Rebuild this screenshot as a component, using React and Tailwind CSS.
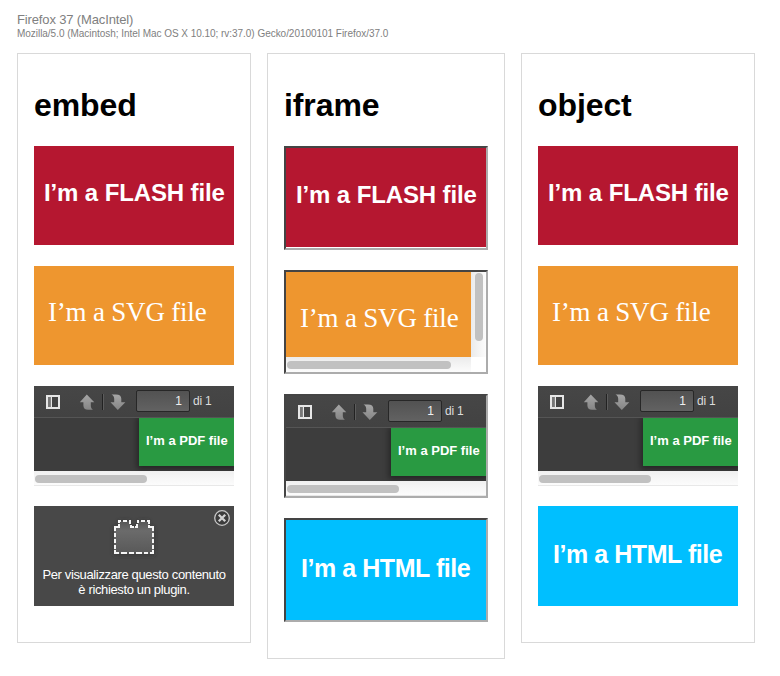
const sans = "font-['Liberation_Sans',Arial,sans-serif]";

function Column({ title, children }) {
  return (
    <section className="border border-[#d9d9d9] px-4 pb-4 pt-[30px]">
      <h1 className="mb-5 h-[42px] text-[32px] font-bold leading-[42px] tracking-[-0.1px] text-black">{title}</h1>
      {children}
    </section>
  );
}

function Frame({ framed, children }) {
  return framed ? (
    <div className="mb-5 h-[104px] w-[204px] border-2 border-b-[#acacac] border-l-[#444] border-r-[#acacac] border-t-[#444]">
      {children}
    </div>
  ) : (
    <div className="mb-5 h-[100px] w-[200px]">{children}</div>
  );
}

function Flash() {
  return (
    <div className="h-[99px] bg-[#b51730] pl-[10px] pt-[32px]">
      <p className="whitespace-nowrap text-[24px] font-bold leading-[30px] tracking-[-0.12px] text-white">I’m a FLASH file</p>
    </div>
  );
}

function SvgText() {
  return (
    <p className="whitespace-nowrap pl-[14px] pt-[31px] font-['Liberation_Serif',serif] text-[27px] leading-[30px] tracking-[-0.2px] text-white">
      I’m a SVG file
    </p>
  );
}

function Svg({ framed }) {
  if (!framed) {
    return (
      <div className="h-[99px] bg-[#ee962f]">
        <SvgText />
      </div>
    );
  }
  return (
    <div className="grid h-[100px] grid-cols-[185px_15px] grid-rows-[85px_15px]">
      <div className="overflow-hidden bg-[#ee962f]">
        <SvgText />
      </div>
      <div className="bg-linear-to-r from-[#ebebeb] to-[#fcfcfc] pl-1 pt-px">
        <div className="h-[68px] w-2 rounded-full bg-[#c1c1c1]" />
      </div>
      <div className="bg-linear-to-b from-[#ebebeb] to-[#fcfcfc] pl-px pt-1">
        <div className="h-2 w-[164px] rounded-full bg-[#c1c1c1]" />
      </div>
      <div className="bg-white" />
    </div>
  );
}

function ToolbarIcons() {
  return (
    <svg width="102" height="32" viewBox="0 0 102 32" className="shrink-0">
      <defs>
        <linearGradient id="arrow" x1="0" y1="0" x2="0" y2="1">
          <stop offset="0" stopColor="#a6a6a6" />
          <stop offset="1" stopColor="#858585" />
        </linearGradient>
      </defs>
      <path fillRule="evenodd" fill="#e6e6e6" d="M12 9h14v14H12zM14 11v10h2.5V11zM18 11v10h6V11z" />
      <path fill="#777" d="M14 11h2.5v10H14z" />
      <path fill="url(#arrow)" d="M52.8 8.5 60.3 16.3H56.8V19.5C56.8 21.5 57.5 22.8 59 23.8H54C51 23.8 49.4 22.2 49.4 19.5V16.3H45.8Z" />
      <path fill="#222" d="M68 8h1v16h-1z" />
      <path fill="#5c5c5c" d="M69 8h1v16h-1z" />
      <path fill="url(#arrow)" d="M77.500 8.500H82C85.500 8.500 87.300 10 87.300 12.800V16.300H91.300L83.800 24.100 76.500 16.300H80.200V12.800C80.200 10.800 79.300 9.400 77.500 8.500Z" />
    </svg>
  );
}

function Pdf() {
  return (
    <div className="h-[100px] overflow-hidden">
      <div className="flex h-8 items-start border-b border-[#555] bg-linear-to-b from-[#464646] to-[#424242]">
        <ToolbarIcons />
        <div className="mt-1 h-[22px] w-[54px] rounded-[2px] border border-[#272727] bg-linear-to-b from-[#525252] to-[#626262] pr-[7px] text-right text-[12px] leading-[21px] text-[#f0f0f0]">
          1
        </div>
        <div className="ml-[3px] mt-1 whitespace-nowrap text-[12px] leading-[22px] tracking-[-0.2px] text-[#dcdcdc]">di 1</div>
      </div>
      <div className="flex h-[53px] justify-end overflow-hidden bg-[#3d3d3d]">
        <div className="h-12 w-[95px] bg-[#299a42] pl-[7px] pt-[14px] shadow-[0_1px_6px_2px_rgba(0,0,0,0.4)]">
          <p className="whitespace-nowrap text-[13px] font-bold leading-[18px] text-white">I’m a PDF file</p>
        </div>
      </div>
      <div className="h-[15px] border-b border-[#e8e8e8] bg-linear-to-b from-[#f0f0f0] to-[#fcfcfc] pl-px pt-1">
        <div className="h-2 w-28 rounded-full bg-[#c1c1c1]" />
      </div>
    </div>
  );
}

function Html() {
  return (
    <div className="h-[100px] bg-[#00bfff] pl-[15px] pt-[33px]">
      <p className="whitespace-nowrap text-[25px] font-bold leading-[30px] tracking-[-0.45px] text-white">I’m a HTML file</p>
    </div>
  );
}

function MissingPlugin() {
  return (
    <div className="flex h-[100px] flex-col bg-[#484848]">
      <svg width="200" height="61" viewBox="0 0 200 61" className="shrink-0">
        <defs>
          <linearGradient id="brick" x1="0" y1="0" x2="0" y2="1">
            <stop offset="0" stopColor="#555" />
            <stop offset="0.3" stopColor="#6b6b6b" />
            <stop offset="1" stopColor="#585858" />
          </linearGradient>
          <filter id="soft" x="-20%" y="-20%" width="140%" height="150%">
            <feGaussianBlur stdDeviation="2" />
          </filter>
        </defs>
        <path fill="#343434" filter="url(#soft)" d="M80 21H85V15H96V21H104V15H115V21H120V49H80Z" />
        <path fill="url(#brick)" d="M80 21H85V15H96V21H104V15H115V21H120V48H80Z" />
        <g fill="none" stroke="#f5f5f5" strokeWidth="2">
          <path d="M84 15H87M89 15H93M95 15H97M103 15H105M107 15H111M113 15H116" />
          <path d="M85 16V17M96 16V18M104 16V17M115 16V18M85 18V22M97 19V22M103 18V22M115 19V22" />
          <path d="M81 25V21H86M96 21H100M101 21H104M114 21H119V25M81 27V31M81 33V37M81 39V43M119 27V31M119 33V37M119 39V43" />
          <path d="M81 44V47H85M87 47H93M95 47H100M102 47H108M110 47H114M116 47H119V44" />
        </g>
        <circle cx="188" cy="12" r="7.3" fill="#3c3c3c" stroke="#c8c8c8" strokeWidth="1.300" />
        <path d="m184.800 8.800 6.400 6.400m0-6.400-6.400 6.400" stroke="#d2d2d2" strokeWidth="2.300" />
      </svg>
      <p className="whitespace-nowrap text-center text-[13px] leading-[15px] tracking-[-0.36px] text-white">
        Per visualizzare questo contenuto
        <br />è richiesto un plugin.
      </p>
    </div>
  );
}

export default function App() {
  return (
    <main className={`${sans} h-[676px] bg-white pl-[17px] pt-3`}>
      <header className="h-[41px] whitespace-nowrap text-[#808080]">
        <p className="text-[13px] leading-[15px] tracking-[-0.14px]">Firefox 37 (MacIntel)</p>
        <p className="text-[10px] leading-[13px] tracking-[-0.035px]">Mozilla/5.0 (Macintosh; Intel Mac OS X 10.10; rv:37.0) Gecko/20100101 Firefox/37.0</p>
      </header>
      <div className="flex items-start gap-4">
        <Column title="embed">
          <Frame><Flash /></Frame>
          <Frame><Svg /></Frame>
          <Frame><Pdf /></Frame>
          <Frame><MissingPlugin /></Frame>
        </Column>
        <Column title="iframe">
          <Frame framed><Flash /></Frame>
          <Frame framed><Svg framed /></Frame>
          <Frame framed><Pdf /></Frame>
          <Frame framed><Html /></Frame>
        </Column>
        <Column title="object">
          <Frame><Flash /></Frame>
          <Frame><Svg /></Frame>
          <Frame><Pdf /></Frame>
          <Frame><Html /></Frame>
        </Column>
      </div>
    </main>
  );
}
